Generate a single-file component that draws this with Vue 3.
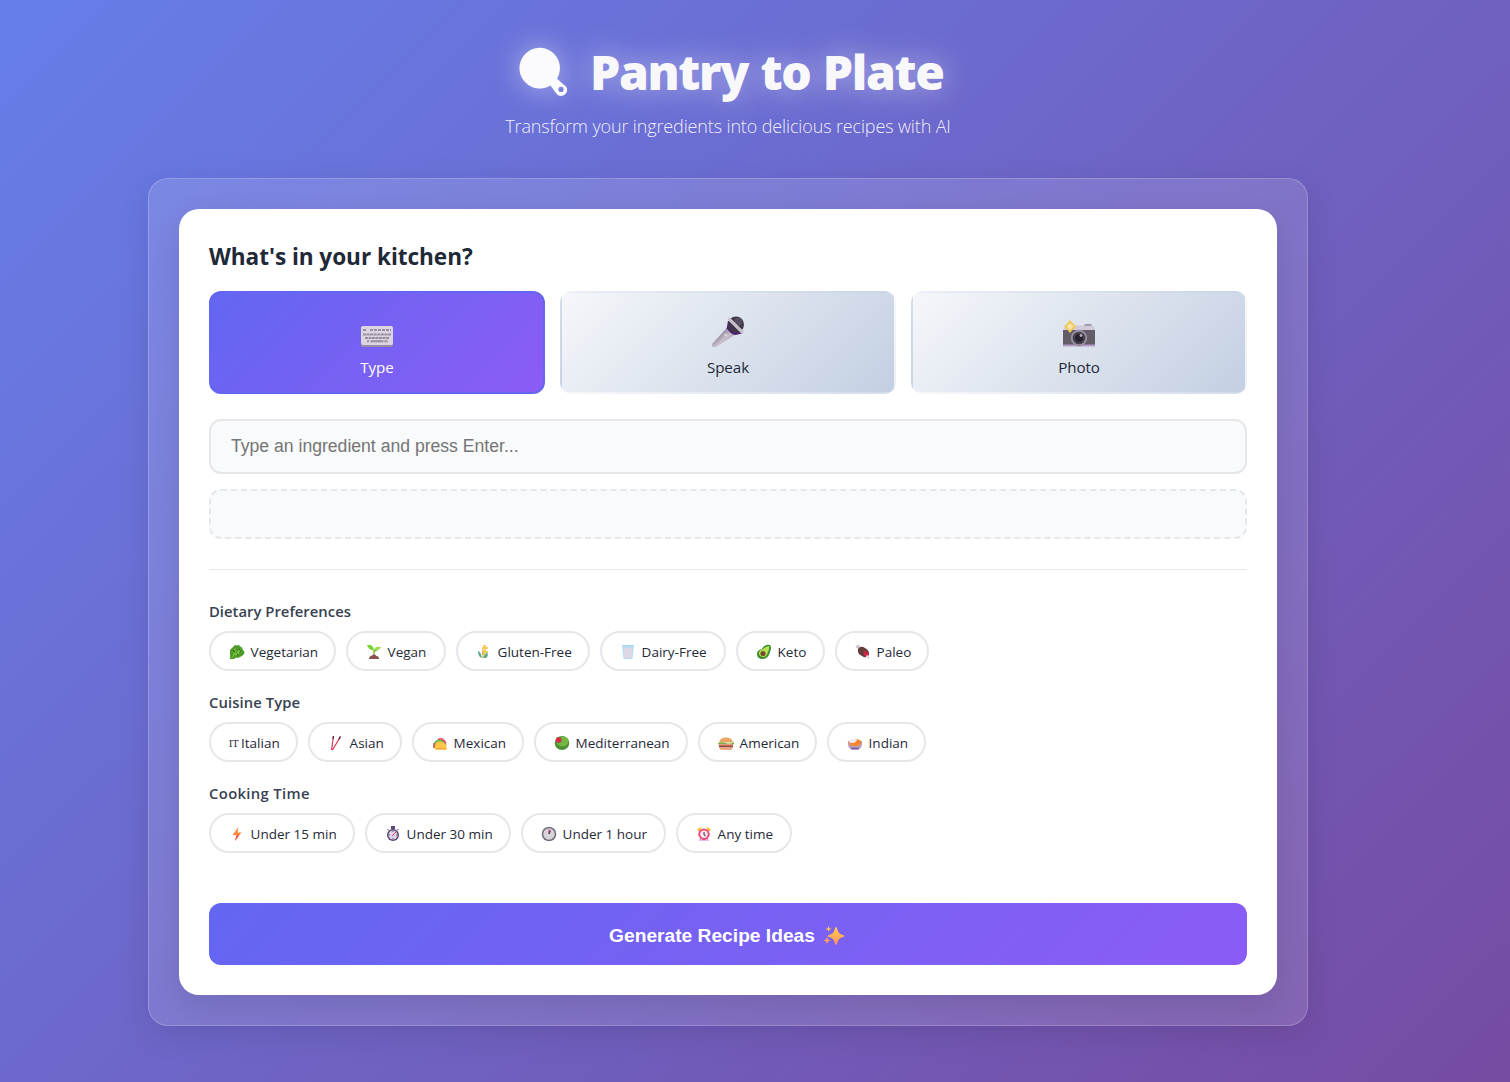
<script setup>
const groups = [
  {
    title: 'Dietary Preferences', spacing: '0.03px',
    items: [
      { icon: 'leaf', text: 'Vegetarian', width: 127 },
      { icon: 'sprout', text: 'Vegan', width: 100 },
      { icon: 'wheat', text: 'Gluten-Free', width: 134 },
      { icon: 'milk', text: 'Dairy-Free', width: 126 },
      { icon: 'avocado', text: 'Keto', width: 89 },
      { icon: 'meat', text: 'Paleo', width: 94 },
    ],
  },
  {
    title: 'Cuisine Type', spacing: '0.1px',
    items: [
      { icon: 'it', text: 'Italian', width: 89 },
      { icon: 'chopsticks', text: 'Asian', width: 94 },
      { icon: 'taco', text: 'Mexican', width: 112 },
      { icon: 'olive', text: 'Mediterranean', width: 154 },
      { icon: 'burger', text: 'American', width: 119 },
      { icon: 'curry', text: 'Indian', width: 99 },
    ],
  },
  {
    title: 'Cooking Time', spacing: '0.36px',
    items: [
      { icon: 'bolt', text: 'Under 15 min', width: 146 },
      { icon: 'stopwatch', text: 'Under 30 min', width: 146 },
      { icon: 'clock', text: 'Under 1 hour', width: 145 },
      { icon: 'alarm', text: 'Any time', width: 116 },
    ],
  },
]
</script>

<template>
  <div class="page">
    <header>
      <h1>
        <svg class="pan" width="50" height="50" viewBox="0 0 50 50">
          <path fill-rule="evenodd" d="M21 .8a20.400 20.400 0 1 0 10.500 37.800l5.600 7.600a6 6 0 1 0 7.400-8.800l-6.500-5.700A20.400 20.400 0 0 0 21 .8zM42 39.800a2.600 2.600 0 1 1 0 5.200 2.600 2.600 0 0 1 0-5.200z" fill="#fbfbfd" />
        </svg>
        <span>Pantry to Plate</span>
      </h1>
      <p>Transform your ingredients into delicious recipes with AI</p>
    </header>

    <main class="glass">
      <section class="panel">
        <h2>What's in your kitchen?</h2>
        <div class="tabs">
          <button class="tab active">
            <svg width="34" height="36" viewBox="0 0 34 36">
              <rect x="1" y="12" width="32" height="21" rx="2" fill="#998aa5" />
              <rect x="1" y="12" width="32" height="19" rx="2" fill="#dad5df" />
              <g stroke="#978fa0" stroke-width="2" fill="none">
                <path d="M3 16h3M10 16h21" stroke-dasharray="3 1" />
                <path d="M3 20.500h28" stroke-dasharray="3 .57" />
                <path d="M5 24h24" stroke-dasharray="3 .5" />
                <path d="M7 27.200h2M10.500 27.200h13M24.500 27.200h3" />
              </g>
            </svg>
            <span>Type</span>
          </button>
          <button class="tab">
            <svg width="34" height="36" viewBox="0 0 34 36">
              <defs>
                <linearGradient id="micBody" x1="0" x2="1" y1="0" y2="1"><stop offset=".2" stop-color="#746c7b" /><stop offset=".55" stop-color="#c7bfcc" /><stop offset="1" stop-color="#8b7f92" /></linearGradient>
              </defs>
              <g transform="translate(0 .8)">
                <path d="M16 13 1.300 29q-1 4 3 3.500L24 20z" fill="url(#micBody)" />
                <circle cx="14.700" cy="20.300" r="1.400" fill="#ded6e1" />
                <path d="m17 6-1.300 7.500q4 6.500 8.800 6.800l6.500-1.500z" fill="#4e226e" />
                <circle cx="25" cy="9.700" r="8" fill="#403849" />
                <circle cx="27" cy="7" r="4" fill="#665d70" opacity=".6" />
                <path d="M18.500 4.500 31 17" stroke="#c9c1ca" stroke-width="3.200" stroke-linecap="round" />
              </g>
            </svg>
            <span>Speak</span>
          </button>
          <button class="tab">
            <svg width="34" height="36" viewBox="0 0 34 36">
              <g transform="translate(0 2)">
                <path d="M3 11q1-1.500 4-1.500h22q3 0 4 3v3H1z" fill="#d1cad9" />
                <path d="M22 9.500q0-1.300 4-1.300t4 1.300z" fill="#777080" />
                <path d="M1 14h32v15.500H1z" fill="#625d67" />
                <path d="M1 28.500h32v2H1z" fill="#b79bcb" />
                <circle cx="17" cy="22" r="8.200" fill="#9991a1" />
                <circle cx="17" cy="22" r="6.300" fill="#46404f" />
                <circle cx="17" cy="22" r="4" fill="#272132" />
                <circle cx="19" cy="19.500" r="1.400" fill="#b2adba" />
                <path d="M8 4.300q1 0 1.600 1.800l3 3.100q1.600.8 1.600 1.300t-1.600 1.300l-3 3.100Q9 16.700 8 16.700t-1.600-1.800l-3-3.100q-1.600-.8-1.600-1.300t1.600-1.300l3-3.100Q7 4.300 8 4.300z" fill="#f0c850" />
                <path d="m8 7 3.500 3.500L8 14l-3.500-3.500z" fill="#fbe5ac" />
              </g>
            </svg>
            <span>Photo</span>
          </button>
        </div>

        <input type="text" placeholder="Type an ingredient and press Enter..." />
        <div class="drop"></div>

        <div class="filters">
          <div v-for="g in groups" :key="g.title" class="group">
            <h3 :style="{ letterSpacing: g.spacing }">{{ g.title }}</h3>
            <div class="chips">
              <button v-for="c in g.items" :key="c.text" class="chip" :style="{ width: c.width + 'px' }">
                <span v-if="c.icon === 'it'" class="flag">IT</span>
                <svg v-else width="16" height="16" viewBox="0 0 16 16">
                  <g v-if="c.icon === 'leaf'">
                    <path d="M1 6 3 4l1-1 2-2 2 .5L10 1l1 1.500 2 1 1 2.500 1.500 2L15 10l-2 2-2 1-2 1-2-.5L5 15H1z" fill="#4f9b27" />
                    <path d="m2 14 10-9M6 4v6M10 6l-1 5M4 10l6 1" stroke="#7cc842" stroke-width="1" fill="none" />
                    <path d="m4 6 2 2m2 2 2 2m0-7 2 2" stroke="#29671b" />
                  </g>
                  <g v-else-if="c.icon === 'sprout'">
                    <path d="M8 11V6M8 7q3 0 4-3" stroke="#72b92b" stroke-width="1.300" fill="none" />
                    <path d="M1 1q6-1 7 5-5 1-7-5z" fill="#7bd437" /><path d="M8 6q1-4 7-3-2 4-7 3z" fill="#9bdf45" />
                    <path d="M3 15q0-3 3-3.500 2-2 4.500.5 2.500 0 2.500 3z" fill="#88534b" />
                  </g>
                  <g v-else-if="c.icon === 'wheat'">
                    <path d="M7 1h3v2h2v2h-2v2h2v2h-3v2H6V7h2V5H6V3h1z" fill="#f7cd62" />
                    <path d="M2 7q3 1 4 7-4-1-4-7zm9 1q2 4-1 6H7q1-3 4-6z" fill="#5ca988" /><path d="M7 5v9" stroke="#c9a14b" />
                  </g>
                  <g v-else-if="c.icon === 'milk'">
                    <path d="M2 1h12l-1.500 14h-9z" fill="#b9dcf5" /><path d="M3.500 4h9l-1 10h-7z" fill="#ddd7e6" /><path d="M2.300 1.500h11.400" stroke="#a9d5f2" />
                  </g>
                  <g v-else-if="c.icon === 'avocado'">
                    <path d="M14 1q2 2 0 7-2 7-7 7-6 0-6-5 0-4 5-5 3-5 8-4z" fill="#368b2e" />
                    <path d="M13 2q1 2-1 6-1 5-5 5-5-1-4-5 1-2 4-3 3-3 6-3z" fill="#b9df52" /><circle cx="7" cy="9.500" r="2.600" fill="#784d2d" />
                  </g>
                  <g v-else-if="c.icon === 'meat'">
                    <path d="m1 2 4 3M3 1l2 4m6 6 3 3" stroke="#cbc0c9" stroke-width="1.800" />
                    <path d="M3 5q3-4 7-1 5 3 4 7-3 4-7 1Q2 10 3 5z" fill="#653c38" />
                    <path d="M9 7q4 0 5 4-3 3-5 0-1-2 0-4z" fill="#cf2449" /><circle cx="12.500" cy="13" r="1.700" fill="#eadce4" />
                  </g>
                  <g v-else-if="c.icon === 'chopsticks'">
                    <path d="M5.500 1 3.500 15M12.500 1.500 4.500 15" stroke="#dc3558" stroke-width="1.200" /><path d="m5.500 1-.4 3M12.500 1.500l-1.700 3" stroke="#553044" stroke-width="1.400" />
                  </g>
                  <g v-else-if="c.icon === 'taco'">
                    <path d="M1 13q0-6 4-8 5-2 8 2 2 3 1 4z" fill="#55b34a" /><path d="M6 4.500q4-2 6 1l2 3" stroke="#ef4664" stroke-width="1.500" fill="none" /><path d="M2 8v5" stroke="#ef4664" stroke-width="1.300" />
                    <path d="M3 14.500q-1-8.500 5-8.500 7 1 7 8.500z" fill="#ffc549" /><path d="M4 13.800h10" stroke="#efa637" stroke-width="1.300" />
                  </g>
                  <g v-else-if="c.icon === 'olive'">
                    <ellipse cx="8" cy="8" rx="7.300" ry="7" fill="#4d9134" /><ellipse cx="8.500" cy="6.500" rx="6" ry="5" fill="#74b544" /><circle cx="4.700" cy="5" r="3" fill="#9f573d" /><circle cx="4.500" cy="5" r="2.200" fill="#ed214a" />
                  </g>
                  <g v-else-if="c.icon === 'burger'">
                    <path d="M1 7.500q1-5 7-5t7 5z" fill="#e9a461" /><path d="M0 8q4-1.500 8 0t8-1v2.500H0z" fill="#7bb54b" /><path d="M1 9.500h14v1.500H1z" fill="#e96a55" /><path d="M1 10.800h14v1.700H1z" fill="#854f48" /><path d="M1.500 12.500h13q0 2.500-2 2.500h-9q-2 0-2-2.500z" fill="#efa77c" />
                  </g>
                  <g v-else-if="c.icon === 'curry'">
                    <path d="M1 6h14q1 7-4 8.500H5Q0 13 1 6z" fill="#b5a1c5" /><ellipse cx="8" cy="7" rx="6.500" ry="3" fill="#f7832f" /><path d="M2 6q1-3 4-2 3-1 4 1-1 3-5 3Q2 8 2 6z" fill="#eeeaf4" /><path d="M3 9h10v2H3z" fill="#f48a32" /><path d="M4 12.500h8v2H4z" fill="#8462a5" />
                  </g>
                  <g v-else-if="c.icon === 'bolt'">
                    <path d="M9.500 1 3.500 9h4L6 15l6.500-8.500H8.500z" fill="#ff883e" /><path d="m7.500 9L6 15l4-5.500z" fill="#f35359" />
                  </g>
                  <g v-else-if="c.icon === 'stopwatch'">
                    <path d="M6.500 0h3v3h-3zM2.500 3l1.500 1.500m9.500-1.500L12 4.500" fill="#61487b" stroke="#61487b" /><circle cx="8" cy="9" r="6" fill="#57456e" /><circle cx="8" cy="9" r="4.500" fill="#dfd7e7" /><path d="m7 10 4-4" stroke="#ec3e74" /><path d="M8 5v1m4 3h-1m-7 0h1m3 3v1" stroke="#65577a" />
                  </g>
                  <g v-else-if="c.icon === 'clock'">
                    <circle cx="8" cy="8" r="7.300" fill="#77717d" /><circle cx="8" cy="8" r="5.700" fill="#d8d4dc" /><path d="M8 8V3.500" stroke="#df406e" stroke-width="1.300" /><path d="m8 8 1.500-3.500" stroke="#4b4155" stroke-width="1.200" />
                  </g>
                  <g v-else>
                    <path d="M3 13h10v2H3z" fill="#dfc2ec" /><path d="M1.500 5Q1 1 6 1.500L3.500 5.500zm13 0Q15 1 10 1.500l2.500 4z" fill="#ffc338" /><circle cx="8" cy="8.300" r="5.700" fill="#f04b78" /><circle cx="8" cy="8.300" r="3.700" fill="#f7e7f0" /><path d="M8 6v2.500l1.500 1.500" stroke="#674768" stroke-width="1.200" fill="none" />
                  </g>
                </svg>
                <span class="chip-text">{{ c.text }}</span>
              </button>
            </div>
          </div>
        </div>

        <button class="generate">
          <span>Generate Recipe Ideas</span>
          <svg width="22" height="20" viewBox="0 0 22 20">
            <defs><linearGradient id="spark" x1="0" y1="0" x2="0" y2="1"><stop stop-color="#ffcf47" /><stop offset="1" stop-color="#ff9163" /></linearGradient></defs>
            <g fill="url(#spark)">
              <path d="M13 1q1 0 1.500 3 .8 3.500 4 4.500 3 .7 3 1.500t-3 1.500q-3.200 1-4 4.500-.5 3-1.500 3t-1.500-3q-.8-3.500-4-4.500-3-.7-3-1.500t3-1.500q3.200-1 4-4.500Q12 1 13 1z" />
              <path d="m5.500 0 .9 2.200 2.300.8-2.300.8L5.500 6l-.8-2.200L2.300 3l2.400-.8zM4 11l1.100 2.500 2.600 1-2.600 1L4 18l-1-2.500-2.700-1 2.700-1z" />
            </g>
          </svg>
        </button>
      </section>
    </main>
  </div>
</template>

<style>
body { margin: 0; }
</style>

<style scoped>
* { box-sizing: border-box; }
.page {
  height: 1082px;
  padding: 40px 202px 0 148px;
  overflow: hidden;
  background: linear-gradient(135deg, #667eea 0%, #764ba2 100%);
  font-family: "Open Sans", "Noto Sans", sans-serif;
  color: #1f2937;
}
header { height: 138px; text-align: center; }
h1 {
  display: flex;
  align-items: center;
  height: 64px;
  margin: 0;
  padding-left: 371px;
  gap: 21px;
  color: #f8f8fa;
  font-size: 48px;
  line-height: 62px;
  font-weight: 800;
  letter-spacing: -1.35px;
  word-spacing: 1.2px;
  white-space: nowrap;
  text-shadow: 0 0 30px rgba(255, 255, 255, .5);
}
h1 span { padding-bottom: 1px; }
.pan { overflow: visible; filter: drop-shadow(0 0 14px rgba(255, 255, 255, .45)); }
header p {
  margin: 9px 0 0;
  font-size: 18px;
  line-height: 26px;
  font-weight: 300;
  letter-spacing: -.14px;
  color: rgba(255, 255, 255, .9);
}
.glass {
  height: 848px;
  padding: 30px;
  border: 1px solid rgba(255, 255, 255, .2);
  border-radius: 20px;
  background: rgba(255, 255, 255, .12);
  box-shadow: 0 8px 32px rgba(0, 0, 0, .1);
}
.panel {
  height: 786px;
  padding: 32px 30px 30px;
  border-radius: 20px;
  background: #fff;
  box-shadow: 0 10px 30px rgba(0, 0, 0, .1);
}
h2 { margin: 0 0 18px; font-size: 22.6px; line-height: 32px; font-weight: 700; letter-spacing: -.05px; }
.tabs { display: grid; grid-template-columns: repeat(3, 1fr); gap: 15px; }
button { font: inherit; color: inherit; }
.tab {
  display: flex;
  flex-direction: column;
  align-items: center;
  height: 103px;
  padding: 21px 0 0;
  border: 2px solid rgba(255, 255, 255, .1);
  border-radius: 12px;
  background: linear-gradient(135deg, #f5f7fa 0%, #c3cfe2 100%);
  font-size: 15.2px;
}
.tab span { line-height: 24px; margin-top: 5px; letter-spacing: -.1px; }
.active {
  border-color: #6366f1;
  background: linear-gradient(135deg, #6366f1 0%, #8b5cf6 100%);
  color: #fff;
}
input {
  display: block;
  width: 100%;
  height: 55px;
  margin: 25px 0 15px;
  padding: 0 20px;
  border: 2px solid #e5e7eb;
  border-radius: 12px;
  background: #f9fafb;
  font: 17.6px "Liberation Sans", Arial, sans-serif;
}
input::placeholder { color: #757575; }
.drop { height: 50px; border: 2px dashed #e5e7eb; border-radius: 12px; background: #f9fafb; }
.filters { height: 334px; margin-top: 30px; padding-top: 30px; border-top: 1px solid #e5e7eb; }
.group { height: 91px; }
h3 { margin: 0 0 8px; font-size: 14.8px; line-height: 23px; font-weight: 600; color: #374151; }
.chips { display: flex; gap: 10px; }
.chip {
  display: flex;
  align-items: center;
  height: 40px;
  padding: 0 0 0 17px;
  border: 2px solid #e5e7eb;
  border-radius: 25px;
  background: #fff;
  font-size: 13.5px;
  white-space: nowrap;
}
.chip svg { flex: none; margin: 2px 5.600px 0 1px; }
.chip-text { padding-top: 1px; }
.flag { width: 15px; margin-left: -2px; font-size: 9.500px; padding-top: 2px; font-family: "DejaVu Serif", serif; letter-spacing: -.3px; }
.generate {
  display: flex;
  align-items: center;
  justify-content: center;
  gap: 8px;
  width: 100%;
  height: 62px;
  padding: 3px 2px 0 0;
  border: 0;
  border-radius: 12px;
  background: linear-gradient(135deg, #6366f1 0%, #8b5cf6 100%);
  color: #fff;
  font: bold 19.2px "Liberation Sans", Arial, sans-serif;
}
</style>
